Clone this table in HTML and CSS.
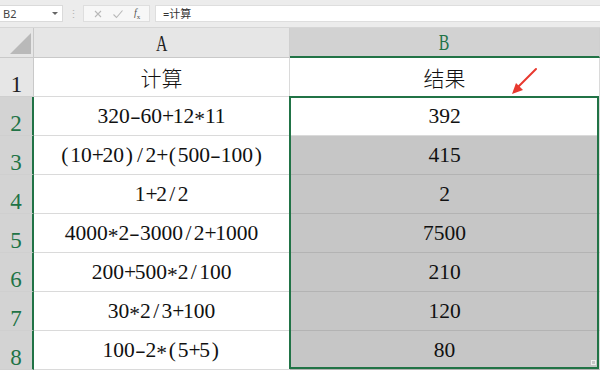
FILE: index.html
```html
<!DOCTYPE html>
<html lang="zh">
<head>
<meta charset="utf-8">
<title>计算</title>
<link rel="stylesheet" href="styles.css">
</head>
<body>
<div class="app">
  <div class="formula-bar">
    <div class="name-box"><span>B2</span><span class="caret"></span></div>
    <div class="grip">⋮</div>
    <div class="fn-buttons">
      <svg class="fn-icon" viewBox="0 0 10 10" width="10" height="10"><path d="M2 2 L8 8 M8 2 L2 8" stroke="#b8b8b8" stroke-width="1.1" fill="none"/></svg>
      <svg class="fn-icon" viewBox="0 0 12 10" width="12" height="10"><path d="M1.5 5.5 L4.5 8.5 L10.5 1.5" stroke="#b8b8b8" stroke-width="1.1" fill="none"/></svg>
      <span class="fx"><i>f</i><sub>x</sub></span>
    </div>
    <div class="formula-input">=计算</div>
  </div>

  <div class="sheet">
    <div class="corner"><span class="corner-tri"></span></div>
    <div class="col-head"><span class="tall">A</span></div>
    <div class="col-head is-sel"><span class="tall">B</span></div>

    <div class="row-head">1</div>
    <div class="cell cjk">计算</div>
    <div class="cell cjk">结果</div>

    <div class="row-head is-sel">2</div>
    <div class="cell"><span class="expr">320<span class="op dash">-</span>60<span class="op">+</span>12<span class="op star">*</span>11</span></div>
    <div class="cell active">392</div>

    <div class="row-head is-sel">3</div>
    <div class="cell"><span class="expr"><span class="op">(</span>10<span class="op">+</span>20<span class="op">)</span><span class="op">/</span>2<span class="op">+</span><span class="op">(</span>500<span class="op dash">-</span>100<span class="op">)</span></span></div>
    <div class="cell sel">415</div>

    <div class="row-head is-sel">4</div>
    <div class="cell"><span class="expr">1<span class="op">+</span>2<span class="op">/</span>2</span></div>
    <div class="cell sel">2</div>

    <div class="row-head is-sel">5</div>
    <div class="cell"><span class="expr">4000<span class="op star">*</span>2<span class="op dash">-</span>3000<span class="op">/</span>2<span class="op">+</span>1000</span></div>
    <div class="cell sel">7500</div>

    <div class="row-head is-sel">6</div>
    <div class="cell"><span class="expr">200<span class="op">+</span>500<span class="op star">*</span>2<span class="op">/</span>100</span></div>
    <div class="cell sel">210</div>

    <div class="row-head is-sel">7</div>
    <div class="cell"><span class="expr">30<span class="op star">*</span>2<span class="op">/</span>3<span class="op">+</span>100</span></div>
    <div class="cell sel">120</div>

    <div class="row-head is-sel">8</div>
    <div class="cell"><span class="expr">100<span class="op dash">-</span>2<span class="op star">*</span><span class="op">(</span>5<span class="op">+</span>5<span class="op">)</span></span></div>
    <div class="cell sel">80</div>

    <div class="selection"><span class="fill-handle"></span></div>

    <svg class="pointer" viewBox="0 0 40 40" width="40" height="40">
      <path d="M33 4 L15 22" stroke="#e8392f" stroke-width="2" stroke-linecap="round" fill="none"/>
      <path d="M9 29 L13 18 L20 25 Z" fill="#e8392f"/>
    </svg>
  </div>
</div>
</body>
</html>
```

FILE: styles.css
```css
* { box-sizing: border-box; }

html, body {
  margin: 0;
  padding: 0;
  background: #ffffff;
}

.app {
  width: 600px;
  height: 370px;
  overflow: hidden;
  font-family: "Liberation Serif", "Noto Sans CJK SC", serif;
}

/* ---- formula bar ---- */
.formula-bar {
  height: 28px;
  background: #ececec;
  border-bottom: 1px solid #d6d6d6;
  display: flex;
  align-items: center;
  font-family: "Noto Sans", "Noto Sans CJK SC", sans-serif;
}

.name-box {
  width: 63px;
  height: 17px;
  background: #ffffff;
  border: 1px solid #dadada;
  border-left: none;
  display: flex;
  align-items: center;
  justify-content: space-between;
  padding: 0 4px 0 3px;
  font-size: 11px;
  color: #444;
}

.caret {
  width: 0;
  height: 0;
  border-left: 3px solid transparent;
  border-right: 3px solid transparent;
  border-top: 3px solid #666;
}

.grip {
  width: 20px;
  text-align: center;
  color: #b5b5b5;
  font-size: 11px;
}

.fn-buttons {
  width: 67px;
  height: 17px;
  background: #f7f7f7;
  border: 1px solid #dedede;
  display: flex;
  align-items: center;
  justify-content: space-around;
  padding: 0 4px;
}

.fx {
  font-family: "Liberation Serif", serif;
  font-size: 10px;
  color: #555;
}
.fx sub { font-size: 7px; }

.formula-input {
  flex: 1;
  height: 17px;
  margin-left: 5px;
  background: #ffffff;
  border: 1px solid #dedede;
  border-right: none;
  font-size: 11px;
  line-height: 15px;
  padding-left: 7px;
  color: #333;
}

/* ---- worksheet grid ---- */
.sheet {
  position: relative;
  display: grid;
  grid-template-columns: 34px 256px 310px;
  grid-template-rows: 30px repeat(8, 39px);
}

.corner {
  background: #e6e6e6;
  border-right: 1px solid #c9c9c9;
  border-bottom: 1px solid #c9c9c9;
  position: relative;
}

.corner-tri {
  position: absolute;
  right: 2px;
  bottom: 3px;
  width: 0;
  height: 0;
  border-left: 21px solid transparent;
  border-bottom: 21px solid #b9b9b9;
}

.col-head {
  background: #e6e6e6;
  border-right: 1px solid #cfcfcf;
  border-bottom: 1px solid #c9c9c9;
  display: flex;
  align-items: center;
  justify-content: center;
  font-size: 24px;
  line-height: 1;
  color: #222;
}

.tall {
  display: inline-block;
  transform: scaleX(0.66);
}

.col-head.is-sel {
  background: #d2d2d2;
  color: #217346;
  border-bottom: 2px solid #217346;
}

.row-head {
  background: #e6e6e6;
  border-right: 1px solid #c9c9c9;
  border-bottom: 1px solid #cfcfcf;
  display: flex;
  align-items: flex-end;
  justify-content: center;
  font-size: 23px;
  line-height: 1;
  color: #222;
}

.row-head.is-sel {
  background: #d3d3d3;
  color: #217346;
  border-right: 2px solid #217346;
}

.cell {
  background: #ffffff;
  border-right: 1px solid #dadada;
  border-bottom: 1px solid #dadada;
  display: flex;
  align-items: center;
  justify-content: center;
  font-size: 21.5px;
  color: #111;
  white-space: nowrap;
}

.cell.cjk {
  font-size: 21px;
  font-weight: 300;
}

/* operators are set half-width, like the digits */
.op {
  display: inline-block;
  width: 0.5em;
  text-align: center;
}

.op.star {
  transform: translateY(0.16em);
}

.op.dash {
  transform: scaleX(1.5);
}

.cell.sel {
  background: #c6c6c6;
  border-bottom-color: #b3b3b3;
}

/* outline of the selected range B2:B8 */
.selection {
  position: absolute;
  left: 289px;
  top: 68px;
  width: 310px;
  height: 273px;
  border: 2px solid #217346;
  pointer-events: none;
}

.fill-handle {
  position: absolute;
  right: 1px;
  bottom: 2px;
  width: 5px;
  height: 5px;
  border: 1px solid #eeeeee;
}

.pointer {
  position: absolute;
  left: 503px;
  top: 37px;
}
```
